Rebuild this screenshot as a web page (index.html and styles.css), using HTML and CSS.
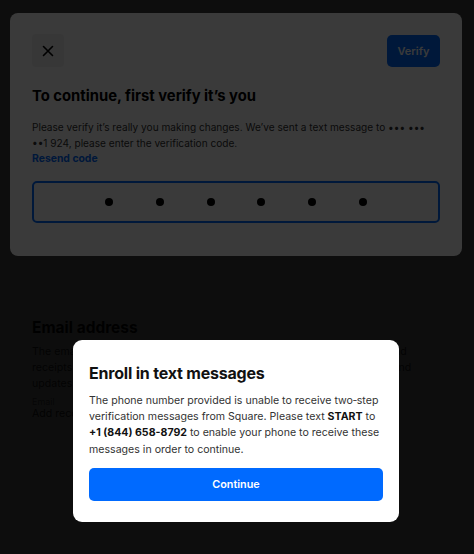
FILE: index.html
```html
<!DOCTYPE html>
<html lang="en">
<head>
<meta charset="utf-8">
<title>Enroll in text messages</title>
<link rel="stylesheet" href="styles.css">
</head>
<body>
<main class="page">
  <section class="section">
    <h2 class="section-title">Email address</h2>
    <p class="section-text">The email address you use to sign in to Square. This is also where we send receipts so you can make sure that you always get important messages and updates about your account and your business from us.</p>
    <p class="section-label">Email</p>
    <p class="section-value">Add recovery email address</p>
  </section>
</main>

<div class="overlay">
  <div class="verify">
    <div class="verify-bar">
      <button class="close" aria-label="Close">
        <svg width="12" height="12" viewBox="0 0 12 12"><path d="M1.5 1.5 L10.5 10.5 M10.5 1.5 L1.5 10.5" stroke="#000" stroke-width="1.6" stroke-linecap="round"/></svg>
      </button>
      <button class="verify-btn">Verify</button>
    </div>
    <h1 class="verify-title">To continue, first verify it’s you</h1>
    <p class="verify-text">Please verify it’s really you making changes. We’ve sent a text message to ••• ••• ••1&nbsp;924, please enter the verification code.</p>
    <a class="resend">Resend code</a>
    <div class="code">
      <span class="dot"></span><span class="dot"></span><span class="dot"></span><span class="dot"></span><span class="dot"></span><span class="dot"></span>
    </div>
  </div>
</div>

<div class="overlay overlay-top">
  <div class="dialog">
    <h2 class="dialog-title">Enroll in text messages</h2>
    <p class="dialog-text">The phone number provided is unable to receive two&#8209;step verification messages from Square. Please text <b>START</b> to <b>+1 (844) 658-8792</b> to enable your phone to receive these messages in order to continue.</p>
    <button class="continue">Continue</button>
  </div>
</div>
</body>
</html>
```

FILE: styles.css
```css
* { box-sizing: border-box; }
html, body { margin: 0; height: 100%; }
body {
  background: #ffffff;
  font-family: Inter, "Noto Sans", "Liberation Sans", sans-serif;
  color: #1a1a1a;
  overflow: hidden;
}

.page { padding: 317px 42px 0 32px; }
.section-title { margin: 0 0 5px; font-size: 15.5px; font-weight: 700; line-height: 22px; color: #111; }
.section-text { margin: 0; font-size: 10.6px; line-height: 16px; color: #444; }
.section-label { margin: 4px 0 0; font-size: 9px; line-height: 11px; color: #777; }
.section-value { margin: 0; font-size: 10.6px; line-height: 14px; color: #333; }

.overlay {
  position: fixed;
  inset: 0;
  background: rgba(0, 0, 0, 0.772);
  padding: 13px 12px 0 10px;
}

.verify {
  background: #ffffff;
  border-radius: 8px;
  height: 243px;
  padding: 21px 22px 0 22px;
}
.verify-bar { display: flex; justify-content: space-between; align-items: center; }
.close {
  width: 32px; height: 33px;
  border: 0; border-radius: 4px;
  background: #f0f0f0;
  display: flex; align-items: center; justify-content: center;
  padding: 0;
}
.verify-btn {
  height: 32px; width: 53px;
  border: 0; border-radius: 5px;
  background: #006aff;
  color: #fff;
  font: 600 11px Inter, sans-serif;
  padding: 0;
}
.verify-title { margin: 18px 0 0; font-size: 14.8px; font-weight: 700; line-height: 22px; color: #000; }
.verify-text { margin: 12px 0 0; font-size: 10.1px; line-height: 16px; color: #333; }
.resend { display: block; font-size: 10.4px; font-weight: 700; line-height: 16px; color: #006aff; }
.code {
  margin-top: 14px;
  height: 42px;
  border: 2px solid #006aff;
  border-radius: 5px;
  display: flex; align-items: center;
  padding-left: 71px;
  gap: 42.8px;
}
.dot { width: 8px; height: 8px; border-radius: 50%; background: #000; }

.overlay-top {
  padding: 340px 0 0 73px;
  display: flex; justify-content: flex-start; align-items: flex-start;
}
.dialog {
  width: 326px;
  background: #ffffff;
  border-radius: 9px;
  padding: 22px 16px 21px 16px;
}
.dialog-title { margin: 0; font-size: 16px; font-weight: 700; line-height: 22px; color: #111; letter-spacing: -0.2px; }
.dialog-text { margin: 9px 0 0; font-size: 10.6px; line-height: 16.2px; color: #333; }
.dialog-text b { color: #111; font-weight: 700; }
.continue {
  display: block; width: 100%;
  margin-top: 10px;
  height: 33px;
  border: 0; border-radius: 5px;
  background: #006aff;
  color: #fff;
  font: 600 10.8px Inter, sans-serif;
}
```
